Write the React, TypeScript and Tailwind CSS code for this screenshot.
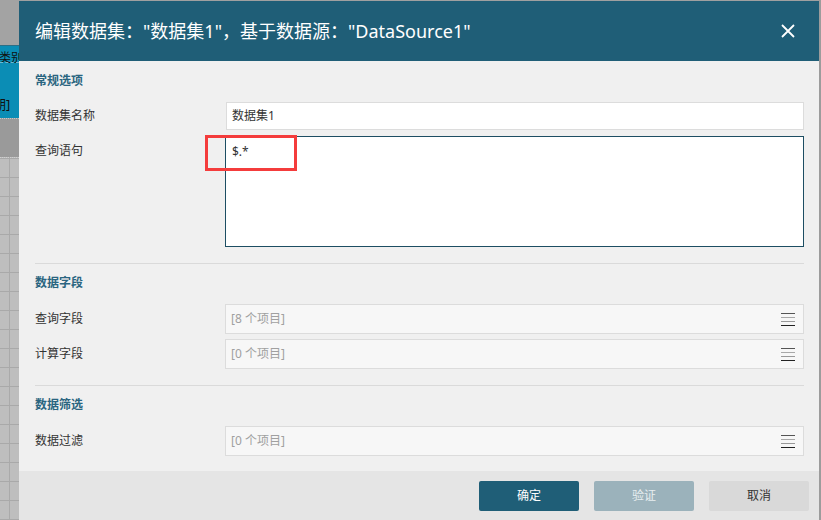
import React from "react";

const font = { fontFamily: '"Noto Sans", "Noto Sans CJK SC", sans-serif' };

function Hamburger() {
  return (
    <svg width="14" height="13" viewBox="0 0 14 13" className="shrink-0">
      <rect x="0" y="0" width="14" height="1" fill="#555" />
      <rect x="0" y="4" width="14" height="1" fill="#a8a8a8" />
      <rect x="0" y="8" width="14" height="1" fill="#999" />
      <rect x="0" y="12" width="14" height="1" fill="#222" />
    </svg>
  );
}

function ListField({ label, value }: { label: string; value: string }) {
  return (
    <div className="flex items-center">
      <div className="w-[190px] text-[12px] text-[#333]">{label}</div>
      <div className="flex-1 h-[30px] border border-[#dcdcdc] bg-[#f7f7f7] flex items-center justify-between pl-[5px] pr-[8px]">
        <span className="text-[12px] text-[#a0a0a0]">{value}</span>
        <Hamburger />
      </div>
    </div>
  );
}

function Heading({ children }: { children: React.ReactNode }) {
  return <div className="h-[20px] leading-[20px] text-[12px] font-semibold text-[#2a6580]">{children}</div>;
}

export default function App() {
  return (
    <div className="w-[821px] h-[520px] overflow-hidden flex bg-[#a0a0a0]" style={font}>
      {/* left background canvas */}
      <div className="w-[19px] shrink-0 flex flex-col">
        <div className="h-[45px] bg-[#a3a3a3]" />
        <div className="h-[73px] bg-[#0b8db5] relative overflow-hidden border-t border-[#2c6f86]">
          <div className="absolute left-[-1px] top-[3px] text-[12px] text-[#111] whitespace-nowrap">类别</div>
          <div className="absolute left-0 right-0 top-[16px] border-t border-dashed border-[#6fb7cf]" />
          <div className="absolute left-[-7px] top-[49px] text-[13px] text-[#111] whitespace-nowrap">期]</div>
        </div>
        <div className="h-[39px] bg-[#9a9a9a] border-t border-dotted border-[#c8c8c8]" />
        <div
          className="flex-1 bg-[#bebebe] border-t border-dotted border-[#d0d0d0]"
          style={{
            backgroundImage:
              "linear-gradient(#a9a9a9 1px, transparent 1px), linear-gradient(90deg, transparent 9px, #aaaaaa 9px, #aaaaaa 10px, transparent 10px)",
            backgroundSize: "19px 19px, 19px 19px",
          }}
        />
      </div>

      {/* dialog */}
      <div className="w-[800px] shrink-0 mt-[1px] flex flex-col bg-[#f0f0f0]">
        <div className="h-[60px] shrink-0 bg-[#1f5e77] flex items-center justify-between pl-[16px] pr-[24px]">
          <div className="text-[18px] text-white whitespace-nowrap">
            编辑数据集："数据集1"，基于数据源："DataSource1"
          </div>
          <svg width="14" height="14" viewBox="0 0 14 14">
            <path d="M1 1 L13 13 M13 1 L1 13" stroke="white" strokeWidth="1.8" />
          </svg>
        </div>

        <div className="flex-1 pl-[16px] pr-[15px] pt-[10px] overflow-hidden relative">
          <Heading>常规选项</Heading>
          <div className="flex items-center mt-[11px]">
            <div className="w-[191px] text-[12px] text-[#333]">数据集名称</div>
            <div className="flex-1 h-[28px] border border-[#dcdcdc] bg-white flex items-center pl-[5px] text-[12px] text-[#333]">
              数据集1
            </div>
          </div>
          <div className="flex mt-[6px]">
            <div className="w-[190px] text-[12px] text-[#333] pt-[6px]">查询语句</div>
            <div className="flex-1 h-[111px] border border-[#1d4e63] bg-white pl-[6px] pt-[6px] text-[12px] text-[#333]">
              $.*
            </div>
          </div>
          <div className="absolute left-[186px] top-[74px] w-[92px] h-[36px] border-[3px] border-[#f43c3c]" />

          <div className="mt-[16px] border-t border-[#dadada]" />
          <div className="mt-[9px]">
            <Heading>数据字段</Heading>
          </div>
          <div className="mt-[11px] flex flex-col gap-[5px]">
            <ListField label="查询字段" value="[8 个项目]" />
            <ListField label="计算字段" value="[0 个项目]" />
          </div>

          <div className="mt-[16px] border-t border-[#dadada]" />
          <div className="mt-[9px]">
            <Heading>数据筛选</Heading>
          </div>
          <div className="mt-[11px]">
            <ListField label="数据过滤" value="[0 个项目]" />
          </div>
          <div className="mt-[15px] border-t border-[#dadada]" />
        </div>

        <div className="h-[49px] shrink-0 bg-[#e5e5e5] flex justify-end items-start pt-[10px] pr-[10px] gap-[15px]">
          <button className="w-[100px] h-[30px] rounded-[2px] bg-[#1f5e77] text-white text-[12px]">确定</button>
          <button className="w-[100px] h-[30px] rounded-[2px] bg-[#9bb2bb] text-[#e8eef0] text-[12px]">验证</button>
          <button className="w-[100px] h-[30px] rounded-[2px] bg-[#d9d9d9] text-[#333] text-[12px]">取消</button>
        </div>
      </div>

      <div className="w-[2px] shrink-0 bg-[#9c9c9c]" />
    </div>
  );
}
